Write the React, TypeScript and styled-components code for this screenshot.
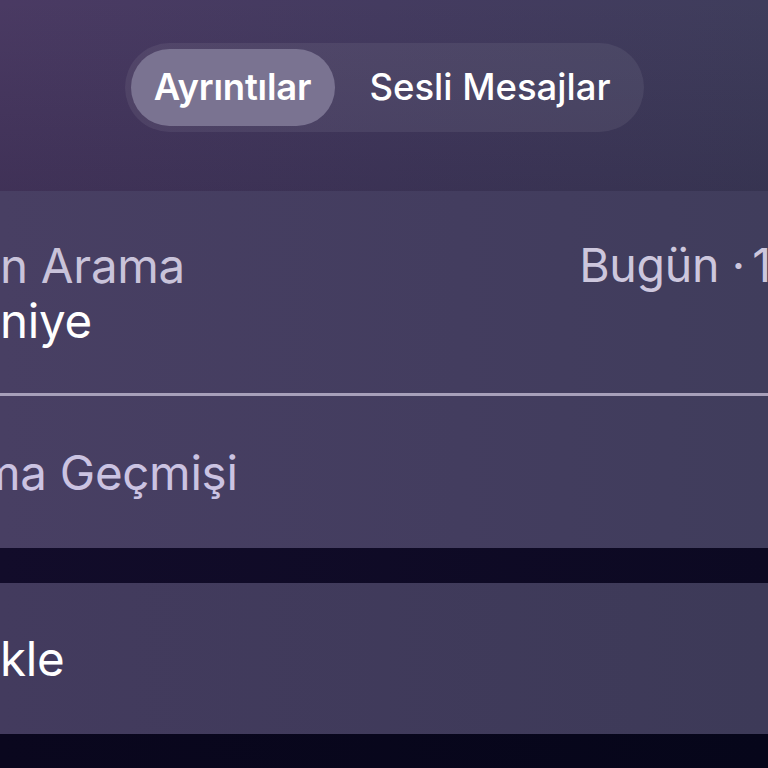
import React from "react";
import styled, { createGlobalStyle } from "styled-components";

const GlobalStyle = createGlobalStyle`
  html, body {
    margin: 0;
    padding: 0;
    background: #08061b;
  }
  body {
    font-family: Inter, "Noto Sans", "Liberation Sans", sans-serif;
    -webkit-font-smoothing: antialiased;
  }
`;

const Page = styled.div`
  width: 768px;
  height: 768px;
  overflow: hidden;
  display: flex;
  flex-direction: column;
  background: #08061b;
`;

const Header = styled.header`
  height: 191px;
  flex: none;
  display: flex;
  justify-content: center;
  align-items: flex-start;
  padding-top: 43px;
  box-sizing: border-box;
  background:
    linear-gradient(180deg, rgba(0, 0, 0, 0) 0%, rgba(10, 4, 24, 0.16) 100%),
    linear-gradient(90deg, #4a3a63 0%, #443b60 50%, #3f3d5c 100%);
`;

const Segmented = styled.div`
  width: 519px;
  height: 89px;
  box-sizing: border-box;
  padding: 6px;
  border-radius: 45px;
  background: rgba(255, 255, 255, 0.065);
  display: flex;
  align-items: stretch;
`;

const Segment = styled.div<{ $active?: boolean }>`
  flex: ${(p) => (p.$active ? "0 0 204px" : "1 1 auto")};
  border-radius: 39px;
  display: flex;
  align-items: center;
  justify-content: center;
  color: #ffffff;
  font-size: 36.5px;
  font-weight: ${(p) => (p.$active ? 600 : 500)};
  letter-spacing: ${(p) => (p.$active ? "-0.2px" : "0px")};
  background: ${(p) => (p.$active ? "#7a7391" : "transparent")};
  padding: 0 0 2px ${(p) => (p.$active ? 0 : 8)}px;
  box-sizing: border-box;
`;

const Card = styled.section<{ $tone?: "upper" | "lower" }>`
  flex: none;
  display: flex;
  flex-direction: column;
  background: ${(p) =>
    p.$tone === "lower"
      ? "linear-gradient(90deg, #433b5e 0%, #3d3a58 100%)"
      : "linear-gradient(90deg, #483f63 0%, #433d5f 60%, #403d5c 100%)"};
`;

const CallRow = styled.div`
  height: 202px;
  box-sizing: border-box;
  padding-top: 47px;
  display: flex;
  align-items: flex-start;
`;

const TextStack = styled.div`
  flex: 1 1 auto;
  display: flex;
  flex-direction: column;
  min-width: 0;
`;

const Line = styled.div<{ $tone?: "muted" | "bright" | "lilac"; $trim?: number }>`
  font-size: 47.5px;
  line-height: 55px;
  font-weight: 400;
  white-space: nowrap;
  letter-spacing: -0.3px;
  margin-left: ${(p) => (p.$trim ? -p.$trim : 0)}px;
  color: ${(p) =>
    p.$tone === "bright" ? "#ffffff" : p.$tone === "lilac" ? "#cbc3e2" : "#c9c3da"};
`;

const Meta = styled.div`
  flex: none;
  font-size: 46.5px;
  line-height: 55px;
  white-space: nowrap;
  letter-spacing: -0.3px;
  color: #cdc7dd;
  margin-right: -3px;
`;

const Separator = styled.div`
  height: 3px;
  background: #a7a0ba;
  flex: none;
`;

const LinkRow = styled.div<{ $h: number }>`
  height: ${(p) => p.$h}px;
  display: flex;
  align-items: center;
  overflow: hidden;
`;

const Gap = styled.div`
  height: 35px;
  flex: none;
  background: linear-gradient(90deg, #120c2a 0%, #0c0922 100%);
`;

const Footer = styled.div`
  flex: 1 1 auto;
  background: linear-gradient(90deg, #0a071e 0%, #06061a 100%);
`;

export default function App() {
  return (
    <>
      <GlobalStyle />
      <Page>
        <Header>
          <Segmented>
            <Segment $active>Ayrıntılar</Segment>
            <Segment>Sesli Mesajlar</Segment>
          </Segmented>
        </Header>
        <Card>
          <CallRow>
            <TextStack>
              <Line $tone="muted">n Arama</Line>
              <Line $tone="bright">niye</Line>
            </TextStack>
            <Meta>{"Bugün ·\u20061"}</Meta>
          </CallRow>
          <Separator />
          <LinkRow $h={152}>
            <Line $tone="lilac" $trim={21}>ma Geçmişi</Line>
          </LinkRow>
        </Card>
        <Gap />
        <Card $tone="lower">
          <LinkRow $h={151}>
            <Line $tone="bright">kle</Line>
          </LinkRow>
        </Card>
        <Footer />
      </Page>
    </>
  );
}
